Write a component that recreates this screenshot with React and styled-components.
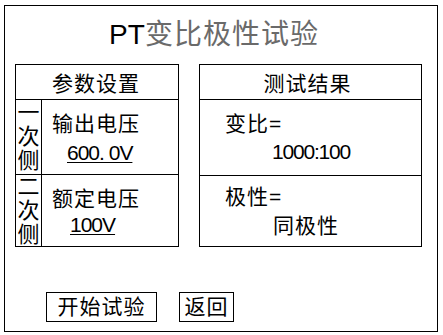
import React from 'react'
import styled, { createGlobalStyle } from 'styled-components'

const GlobalStyle = createGlobalStyle`
  html, body {
    margin: 0;
    padding: 0;
    background: #fff;
  }
  body {
    font-family: "Liberation Sans", "Noto Sans CJK SC", sans-serif;
    color: #000;
  }
`

const Frame = styled.div`
  box-sizing: border-box;
  width: 434px;
  height: 327px;
  margin: 5px 0 0 4px;
  border: 1px solid #000;
  padding: 0 14px 0 10px;
  display: flex;
  flex-direction: column;
`

const Title = styled.h1`
  margin: 0;
  height: 58px;
  display: flex;
  align-items: center;
  justify-content: center;
  padding-right: 10px;
  font-size: 28px;
  font-weight: normal;
  line-height: 1;
`

const TitleCjk = styled.span`
  color: #6a6a6a;
  letter-spacing: 1px;
`

const Panels = styled.div`
  display: flex;
  gap: 20px;
`

const Panel = styled.section`
  box-sizing: border-box;
  width: ${({ $width }) => $width}px;
  height: 183px;
  border: 1px solid #000;
  display: flex;
  flex-direction: column;
`

const PanelHeader = styled.div`
  box-sizing: border-box;
  height: 35px;
  border-bottom: 1px solid #000;
  display: flex;
  align-items: center;
  justify-content: center;
  padding-right: ${({ $shift }) => $shift || 0}px;
  font-size: 21px;
  letter-spacing: 1px;
`

const Row = styled.div`
  box-sizing: border-box;
  height: ${({ $height }) => $height}px;
  display: flex;
  border-bottom: ${({ $last }) => ($last ? 'none' : '1px solid #000')};
`

const Side = styled.div`
  box-sizing: border-box;
  width: 26px;
  border-right: 1px solid #000;
  display: flex;
  flex-direction: column;
  align-items: center;
  justify-content: center;
  font-size: 22px;
  line-height: 24px;
`

const Cell = styled.div`
  flex: 1;
  padding: ${({ $top }) => $top}px 0 0 ${({ $left }) => $left}px;
  font-size: 21px;
  line-height: 24px;
`

const Label = styled.div`
  letter-spacing: 1px;
`

const Value = styled.div`
  margin: ${({ $gap }) => $gap}px 0 0 ${({ $indent }) => $indent}px;
  text-decoration: ${({ $underline }) => ($underline ? 'underline' : 'none')};
  text-underline-offset: 2px;
  text-decoration-thickness: 1px;
  letter-spacing: ${({ $spacing }) => $spacing || 0}px;
`

const Actions = styled.div`
  display: flex;
  gap: 22px;
  margin: 45px 0 0 31px;
`

const Button = styled.button`
  box-sizing: border-box;
  width: ${({ $width }) => $width}px;
  height: 30px;
  padding: 0;
  border: 1px solid #000;
  background: #fff;
  color: #000;
  font-family: inherit;
  font-size: 21px;
  line-height: 28px;
  letter-spacing: 1px;
`

const SideLabel = ({ chars }) => (
  <Side>
    {chars.map((c) => (
      <span key={c}>{c}</span>
    ))}
  </Side>
)

export default function App() {
  return (
    <>
      <GlobalStyle />
      <Frame>
        <Title>
          PT<TitleCjk>变比极性试验</TitleCjk>
        </Title>
        <Panels>
          <Panel $width={164}>
            <PanelHeader $shift={2}>参数设置</PanelHeader>
            <Row $height={75}>
              <SideLabel chars={['一', '次', '侧']} />
              <Cell $top={12} $left={10}>
                <Label>输出电压</Label>
                <Value $gap={5} $indent={15} $underline $spacing={-1}>
                  600. 0V
                </Value>
              </Cell>
            </Row>
            <Row $height={71} $last>
              <SideLabel chars={['二', '次', '侧']} />
              <Cell $top={12} $left={10}>
                <Label>额定电压</Label>
                <Value $gap={2} $indent={18} $underline $spacing={-1}>
                  100V
                </Value>
              </Cell>
            </Row>
          </Panel>
          <Panel $width={223}>
            <PanelHeader $shift={6}>测试结果</PanelHeader>
            <Row $height={76}>
              <Cell $top={12} $left={25}>
                <Label>变比=</Label>
                <Value $gap={4} $indent={47} $spacing={-1.2}>
                  1000:100
                </Value>
              </Cell>
            </Row>
            <Row $height={70} $last>
              <Cell $top={9} $left={25}>
                <Label>极性=</Label>
                <Value $gap={5} $indent={48} $spacing={1}>
                  同极性
                </Value>
              </Cell>
            </Row>
          </Panel>
        </Panels>
        <Actions>
          <Button $width={111}>开始试验</Button>
          <Button $width={55}>返回</Button>
        </Actions>
      </Frame>
    </>
  )
}
